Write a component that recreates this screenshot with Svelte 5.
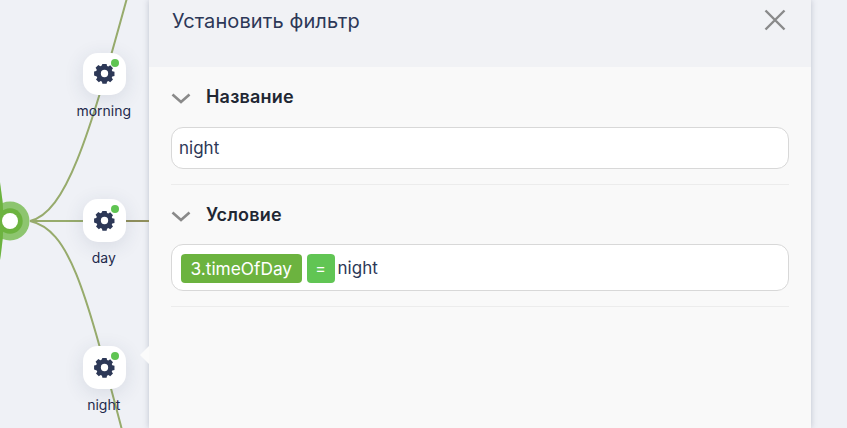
<script lang="ts">
	const nodes = [
		{ name: 'morning', top: 52.5 },
		{ name: 'day', top: 199 },
		{ name: 'night', top: 346 }
	];
</script>

<div class="screen">
	<div class="canvas">
		<svg class="links" width="149" height="428" viewBox="0 0 149 428" fill="none">
			<path d="M30 221 C66 212 88 140 127 -2" stroke="#97ab6c" stroke-width="2" />
			<path d="M30 221 H83" stroke="#97ab6c" stroke-width="2" />
			<path d="M125 221 H149" stroke="#8f8f5c" stroke-width="2" />
			<path d="M30 221 C70 230 85 290 122 430" stroke="#97ab6c" stroke-width="2" />
			<circle cx="10" cy="221" r="19.500" fill="#8dc56f" />
			<circle cx="10" cy="221" r="12.700" fill="#6cb33f" />
			<path d="M0 182 Q7 221 0 260 Z" fill="#6cb33f" />
			<circle cx="10" cy="221" r="8" fill="#fff" />
		</svg>

		{#each nodes as node (node.name)}
			<div class="node" style="top: {node.top}px">
				<div class="node-box">
					<svg width="21" height="21" viewBox="-1 -1 24 24">
						<path
							fill="#2d3857"
							fill-rule="evenodd"
							d="M8.600 0h4.800l.5 2.500 1.500.6 2.100-1.400 3.200 3.200-1.400 2.100.6 1.500 2.500.5v4.800l-2.500.5-.6 1.500 1.400 2.100-3.200 3.200-2.100-1.400-1.500.6-.5 2.500H8.600l-.5-2.500-1.500-.6-2.100 1.400-3.200-3.200 1.400-2.100-.6-1.500L-.9 13.400V8.600l2.500-.5.6-1.500-1.400-2.100 3.200-3.200 2.100 1.400 1.500-.6z M11 6.800a4.200 4.200 0 1 0 0 8.400 4.200 4.200 0 0 0 0-8.400z"
						/>
					</svg>
					<span class="node-dot"></span>
				</div>
				<div class="node-label">{node.name}</div>
			</div>
		{/each}
		<div class="pointer"></div>
	</div>

	<div class="panel">
		<div class="panel-head">
			<span class="panel-title">Установить фильтр</span>
			<svg class="close" width="22" height="22" viewBox="0 0 22 22" fill="none">
				<path d="M1.500 1.500 20.500 20.500M20.500 1.500 1.500 20.500" stroke="#8a8a8a" stroke-width="2.400" />
			</svg>
		</div>
		<div class="panel-body">
			<section class="group">
				<div class="group-head group-head--first">
					<svg width="20" height="11" viewBox="0 0 20 11" fill="none">
						<path d="M1.500 1.500 10 9 18.500 1.500" stroke="#8a8a8a" stroke-width="2.600" />
					</svg>
					<span>Название</span>
				</div>
				<div class="field">night</div>
			</section>
			<section class="group">
				<div class="group-head group-head--tight">
					<svg width="20" height="11" viewBox="0 0 20 11" fill="none">
						<path d="M1.500 1.500 10 9 18.500 1.500" stroke="#8a8a8a" stroke-width="2.600" />
					</svg>
					<span>Условие</span>
				</div>
				<div class="field field--tags">
					<span class="tag">3.timeOfDay</span>
					<span class="tag tag--op">=</span>
					<span>night</span>
				</div>
			</section>
		</div>
	</div>
</div>

<style>
	:global(body) {
		margin: 0;
	}
	.screen {
		display: flex;
		width: 847px;
		height: 428px;
		overflow: hidden;
		background: #eff1f6;
		font-family: Inter, 'Liberation Sans', sans-serif;
		color: #2d3857;
	}
	.canvas {
		position: relative;
		width: 149px;
		height: 428px;
		flex-shrink: 0;
	}
	.links {
		position: absolute;
		left: 0;
		top: 0;
	}
	.node {
		position: absolute;
		left: 83px;
		width: 42.5px;
	}
	.node-box {
		position: relative;
		display: flex;
		align-items: center;
		justify-content: center;
		width: 42.5px;
		height: 42.5px;
		border-radius: 15px;
		background: #fff;
		box-shadow: 0 4px 20px rgba(45, 56, 87, 0.12);
	}
	.node-dot {
		position: absolute;
		top: 6px;
		right: 6.5px;
		width: 8px;
		height: 8px;
		border-radius: 50%;
		background: #5fc452;
	}
	.node-label {
		display: flex;
		justify-content: center;
		margin-top: 7px;
		margin-left: -1px;
		font-size: 14px;
		line-height: 17px;
		white-space: nowrap;
		color: #1f2b4d;
	}
	.pointer {
		position: absolute;
		left: 140px;
		top: 346px;
		width: 0;
		height: 0;
		border-style: solid;
		border-width: 9px 9px 9px 0;
		border-color: transparent #fbfbfb transparent transparent;
	}
	.panel {
		display: flex;
		flex-direction: column;
		width: 662px;
		height: 428px;
		flex-shrink: 0;
		box-shadow: 0 0 6px rgba(45, 56, 87, 0.25);
	}
	.panel-head {
		display: flex;
		justify-content: space-between;
		height: 67px;
		box-sizing: border-box;
		padding: 9px 25px 0 23px;
		background: #f1f2f5;
	}
	.panel-title {
		font-size: 20px;
		line-height: 24px;
		letter-spacing: 0.1px;
	}
	.panel-body {
		flex: 1;
		padding: 0 22px;
		background: #f9f9f9;
	}
	.group {
		border-bottom: 1px solid #ececec;
		padding-bottom: 15px;
	}
	.group-head {
		display: flex;
		align-items: center;
		gap: 15px;
		height: 60px;
		font-size: 18px;
		font-weight: 600;
		letter-spacing: 0.2px;
		color: #212733;
	}
	.group-head svg {
		margin-top: 4px;
	}
	.group-head--first {
		box-sizing: border-box;
		padding-bottom: 2px;
	}
	.group-head--tight {
		height: 59px;
	}
	.field {
		display: flex;
		align-items: center;
		box-sizing: border-box;
		height: 42px;
		padding: 0 7px;
		border: 1px solid #d8d8d8;
		border-radius: 12px;
		background: #fff;
		font-size: 17px;
	}
	.field--tags {
		height: 47px;
		padding: 1px 9px 0;
		gap: 5px;
	}
	.tag {
		padding: 0 9.5px;
		height: 29px;
		line-height: 29px;
		border-radius: 4px;
		background: #6cb33f;
		color: #fff;
		font-size: 17.3px;
	}
	.tag--op {
		margin-right: -2px;
		width: 28px;
		padding: 0;
		text-align: center;
		background: #61c554;
		font-size: 16px;
	}
</style>
